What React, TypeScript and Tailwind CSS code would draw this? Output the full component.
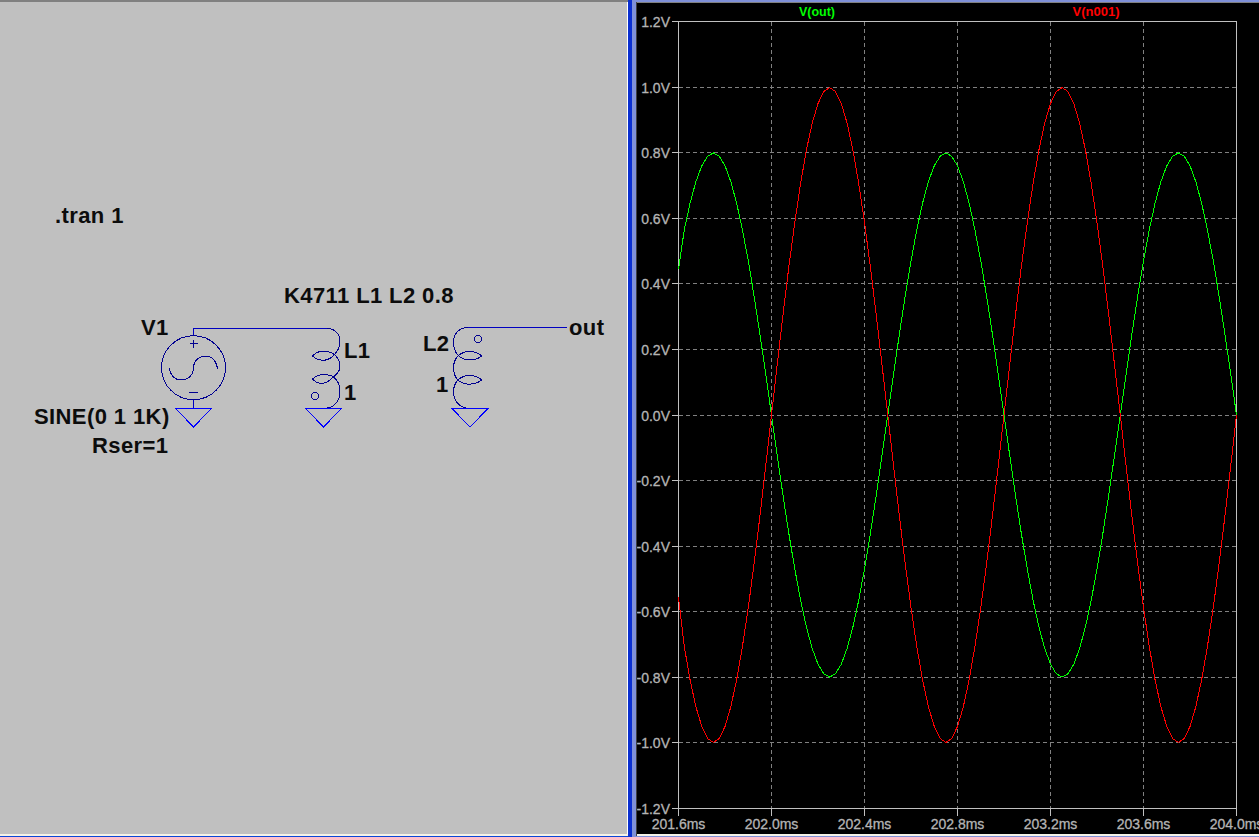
const xs = [0, 1, 2, 3, 4, 5, 6];
const xLabels = ["201.6ms", "202.0ms", "202.4ms", "202.8ms", "203.2ms", "203.6ms", "204.0ms"];
const yLabels = ["1.2V", "1.0V", "0.8V", "0.6V", "0.4V", "0.2V", "0.0V", "-0.2V", "-0.4V", "-0.6V", "-0.8V", "-1.0V", "-1.2V"];
const L = 678.5, R = 1236.5, T = 21.5, B = 808.5;
const xAt = (i: number) => Math.round(L + i * 93) + 0.5 - 1;
const yAt = (i: number) => Math.floor(T + (i * (B - T)) / 12) + 0.5;

function wave(amp: number) {
  const pts: string[] = [];
  const steps = 96;
  for (let i = 0; i <= steps; i++) {
    const t = -0.4 + (2.4 * i) / steps;
    const x = 678.5 + (t + 0.4) * 232.5;
    const v = i === 0 ? -0.556 : Math.sin(2 * Math.PI * t);
    const y = 415 - 327.5 * amp * v;
    pts.push(`${x.toFixed(1)},${y.toFixed(1)}`);
  }
  return pts.join(" ");
}

function Schematic() {
  return (
    <svg className="absolute left-0 top-0" width={627} height={834} viewBox="0 0 627 834" fill="none" shapeRendering="crispEdges">
      {/* wires */}
      <g stroke="#0000c0" strokeWidth={1}>
        <path d="M193.5 336V328.5H327" />
        <path d="M193.5 400V408" />
        <path d="M567 327.5H468" />
      </g>
      {/* voltage source */}
      <g stroke="#000090" strokeWidth={1}>
        <circle cx={193.5} cy={367.7} r={32} />
        <path d="M189.5 343.5H198M193.5 339.5V348M189 392.5H198" />
        <path d="M169.5 368C170 375 175 380 181 380C188 380 193.5 375 193.5 368C193.5 361 199 356 206 356C212 356 217 362 217.5 369" />
      </g>
      {/* L1 */}
      <g stroke="#000090" strokeWidth={1}>
        <path d="M327 328.5C335 328.5 340 334 340 342C340 349 336 353 332 357C326 362 318 361 312.5 356C318 350 326 350 332 353C337 356 340 361 340 366C340 372 336 375 332 378C326 385 318 385 312.5 379C318 374 326 374 332 376C337 379 340 385 340 392C340 400 335 407 327 408" />
        <circle cx={315} cy={396} r={3.5} />
      </g>
      {/* L2 */}
      <g stroke="#000090" strokeWidth={1}>
        <path d="M468 327.5C459 327.5 453.5 334 453.5 342C453.5 348 455 352 458 355C464 362 475 361 482 356C475 350 464 350 458 356C455 359 453.5 363 453.5 368C453.5 373 455 377 458 380C464 386 475 385 482 380C475 374 464 374 458 380C455 383 453.5 387 453.5 392C453.5 400 459 407 466 408" />
        <circle cx={478} cy={339} r={3.5} />
      </g>
      {/* grounds */}
      <g stroke="#0000ff" strokeWidth={1}>
        <path d="M175.5 408.5H211.5L193.5 427Z" />
        <path d="M305.5 408.5H341.5L323.5 427Z" />
        <path d="M452 408.5H488L470 427Z" />
      </g>
    </svg>
  );
}

function Plot() {
  return (
    <svg className="block" width={622} height={831} viewBox="637 3 622 831" fontFamily="'Liberation Sans', Arial, sans-serif">
      <g shapeRendering="crispEdges" strokeWidth={1}>
        {xs.slice(1, 6).map((i) => (
          <line key={i} x1={xAt(i)} x2={xAt(i)} y1={T} y2={B} stroke="#808080" strokeDasharray="4 3" />
        ))}
        {yLabels.slice(1, 12).map((_, i) => (
          <line key={i} x1={L} x2={R} y1={yAt(i + 1)} y2={yAt(i + 1)} stroke="#808080" strokeDasharray="4 3" />
        ))}
        {yLabels.map((_, i) => (
          <line key={i} x1={672} x2={L} y1={yAt(i)} y2={yAt(i)} stroke="#c0c0c0" />
        ))}
        {xs.map((i) => (
          <line key={i} x1={xAt(i)} x2={xAt(i)} y1={B} y2={816} stroke="#c0c0c0" />
        ))}
        <rect x={678.5} y={21.5} width={558} height={787} fill="none" stroke="#c0c0c0" />
        <polyline points={wave(-0.8)} fill="none" stroke="#00ff00" />
        <polyline points={wave(1)} fill="none" stroke="#ff0000" />
      </g>
      <text x={817} y={16} textAnchor="middle" fill="#00ff00" fontSize={12.5} fontWeight={700}>V(out)</text>
      <text x={1096} y={16} textAnchor="middle" fill="#ff0000" fontSize={13} fontWeight={700}>V(n001)</text>
      {yLabels.map((label, i) => (
        <text key={label} x={670} y={yAt(i) + 5} textAnchor="end" fill="#b4b4b4" stroke="#b4b4b4" strokeWidth={0.3} fontSize={14}>{label}</text>
      ))}
      {xLabels.map((label, i) => (
        <text key={label} x={xAt(i)} y={829} textAnchor="middle" fill="#b4b4b4" stroke="#b4b4b4" strokeWidth={0.3} fontSize={14}>{label}</text>
      ))}
    </svg>
  );
}

const label = "absolute whitespace-nowrap text-[22px] leading-none font-bold tracking-[0.4px] text-[#0c0c0c]";

export default function App() {
  return (
    <div className="flex h-[837px] w-[1259px] overflow-hidden bg-[#0a46d8] font-['Liberation_Sans',Arial,sans-serif]">
      <div className="flex w-[628px] flex-col">
        <div className="h-[2px] bg-[#808080]" />
        <div className="relative flex-1 border-r border-r-white bg-[#c0c0c0]">
          <div className="absolute left-0 top-[-2px] h-[834px] w-[627px]">
            <Schematic />
            <span className={`${label} left-[55px] top-[205px]`}>.tran 1</span>
            <span className={`${label} left-[284px] top-[285px]`}>K4711 L1 L2 0.8</span>
            <span className={`${label} left-[141px] top-[317px]`}>V1</span>
            <span className={`${label} left-[344px] top-[340px]`}>L1</span>
            <span className={`${label} left-[344px] top-[382px]`}>1</span>
            <span className={`${label} left-[423px] top-[333px]`}>L2</span>
            <span className={`${label} left-[436px] top-[374px]`}>1</span>
            <span className={`${label} left-[569px] top-[317px]`}>out</span>
            <span className={`${label} left-[34px] top-[406px]`}>SINE(0 1 1K)</span>
            <span className={`${label} left-[92px] top-[435px]`}>Rser=1</span>
          </div>
        </div>
        <div className="h-[2px] bg-[#f4f2e8]" />
        <div className="h-px bg-[#0a46d8]" />
      </div>
      <div className="w-[4px] bg-[#0a2fd0]" />
      <div className="flex flex-1 flex-col">
        <div className="h-[2px] bg-[#7f90d8]" />
        <div className="flex flex-1">
          <div className="w-[4px] bg-[#7f90d8]" />
          <div className="w-px bg-[#404040]" />
          <div className="flex flex-1 flex-col">
            <div className="h-px bg-[#808080]" />
            <div className="h-[831px] bg-black">
              <Plot />
            </div>
            <div className="h-[2px] bg-[#f4f2e8]" />
          </div>
        </div>
        <div className="h-px bg-[#7f90d8]" />
      </div>
    </div>
  );
}
